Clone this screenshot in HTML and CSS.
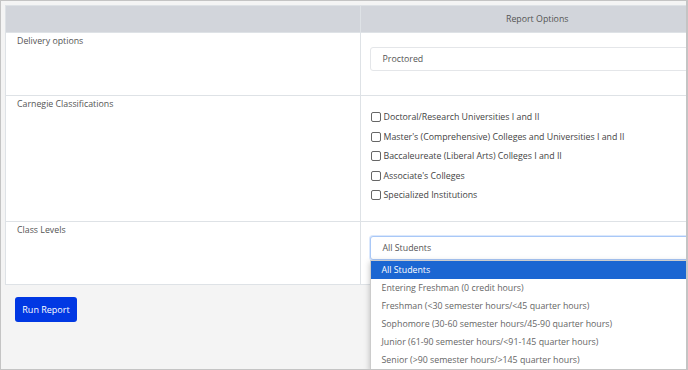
FILE: index.html
```html
<!DOCTYPE html>
<html lang="en">
<head>
  <meta charset="UTF-8" />
  <title>Report Options</title>
  <link rel="stylesheet" href="styles.css">
</head>
<body>
  <div class="frame">
    <table class="report">
      <thead>
        <tr>
          <th></th>
          <th>Report Options</th>
        </tr>
      </thead>
      <tbody>
        <tr class="row-short">
          <td>Delivery options</td>
          <td>
            <div class="field">Proctored</div>
          </td>
        </tr>
        <tr class="row-tall">
          <td>Carnegie Classifications</td>
          <td>
            <div class="checks">
              <label><input type="checkbox"> Doctoral/Research Universities I and II</label>
              <label><input type="checkbox"> Master's (Comprehensive) Colleges and Universities I and II</label>
              <label><input type="checkbox"> Baccaleureate (Liberal Arts) Colleges I and II</label>
              <label><input type="checkbox"> Associate's Colleges</label>
              <label><input type="checkbox"> Specialized Institutions</label>
            </div>
          </td>
        </tr>
        <tr class="row-short">
          <td>Class Levels</td>
          <td>
            <div class="select-wrap">
              <div class="field focused">All Students</div>
              <ul class="dropdown">
                <li class="selected">All Students</li>
                <li>Entering Freshman (0 credit hours)</li>
                <li>Freshman (&lt;30 semester hours/&lt;45 quarter hours)</li>
                <li>Sophomore (30-60 semester hours/45-90 quarter hours)</li>
                <li>Junior (61-90 semester hours/&lt;91-145 quarter hours)</li>
                <li>Senior (&gt;90 semester hours/&gt;145 quarter hours)</li>
              </ul>
            </div>
          </td>
        </tr>
      </tbody>
    </table>

    <div class="actions">
      <button type="button">Run Report</button>
    </div>
  </div>
</body>
</html>
```

FILE: styles.css
```css
* {
  box-sizing: border-box;
  font-family: 'Open Sans', 'Noto Sans', sans-serif;
}

body {
  margin: 0;
}

.frame {
  width: 688px;
  height: 370px;
  overflow: hidden;
  background: #f4f4f4;
  border: 1px solid #c4c4c4;
  border-right-width: 2px;
  padding: 4px 0 0 4px;
}

.report {
  width: 710px;
  border-collapse: collapse;
  table-layout: fixed;
  background: #fff;
  font-size: 8.8px;
  color: #555;
}

.report th,
.report td {
  border: 1px solid #dee2e6;
  vertical-align: top;
}

.report th {
  background: #d2d5db;
  height: 27px;
  font-weight: 400;
  font-size: 8.8px;
  color: #555;
  vertical-align: middle;
}

.report td {
  padding: 2px 10px 0 11px;
}

.report td:last-child {
  padding-left: 9px;
}

.row-short td {
  height: 63px;
}

.row-tall td {
  height: 126px;
}

.field {
  margin-top: 12px;
  height: 24px;
  border: 1px solid #e4e6e9;
  border-radius: 3px;
  padding-left: 12px;
  display: flex;
  align-items: center;
  color: #555;
  background: #fff;
}

.field.focused {
  border-color: #a9c8f7;
  box-shadow: 0 0 0 1px #dbe8fc;
}

.checks {
  display: flex;
  flex-direction: column;
  gap: 5px;
  padding-top: 12px;
  padding-left: 1px;
  color: #444;
}

.checks label {
  display: flex;
  align-items: center;
  gap: 3px;
  height: 14.5px;
}

.checks input {
  width: 10px;
  height: 10px;
  margin: 0;
  appearance: none;
  border: 1px solid #666;
  border-radius: 2px;
  background: #fff;
}

.select-wrap {
  position: relative;
}

.dropdown {
  position: absolute;
  top: 100%;
  left: 0;
  width: 340px;
  margin: 0;
  padding: 0;
  list-style: none;
  background: #fff;
  border: 1px solid #ccc;
  box-shadow: 0 2px 6px rgba(0,0,0,0.25);
  z-index: 2;
}

.dropdown li {
  height: 18px;
  line-height: 18px;
  padding-left: 11px;
  color: #666;
}

.dropdown li.selected {
  background: #1b66d2;
  color: #fff;
}

.actions {
  padding: 11px 0 0 10px;
}

button {
  width: 62px;
  height: 25px;
  border: none;
  border-radius: 3px;
  background: #0138e3;
  color: #fff;
  font-size: 9px;
  font-weight: 500;
  cursor: pointer;
}
```
